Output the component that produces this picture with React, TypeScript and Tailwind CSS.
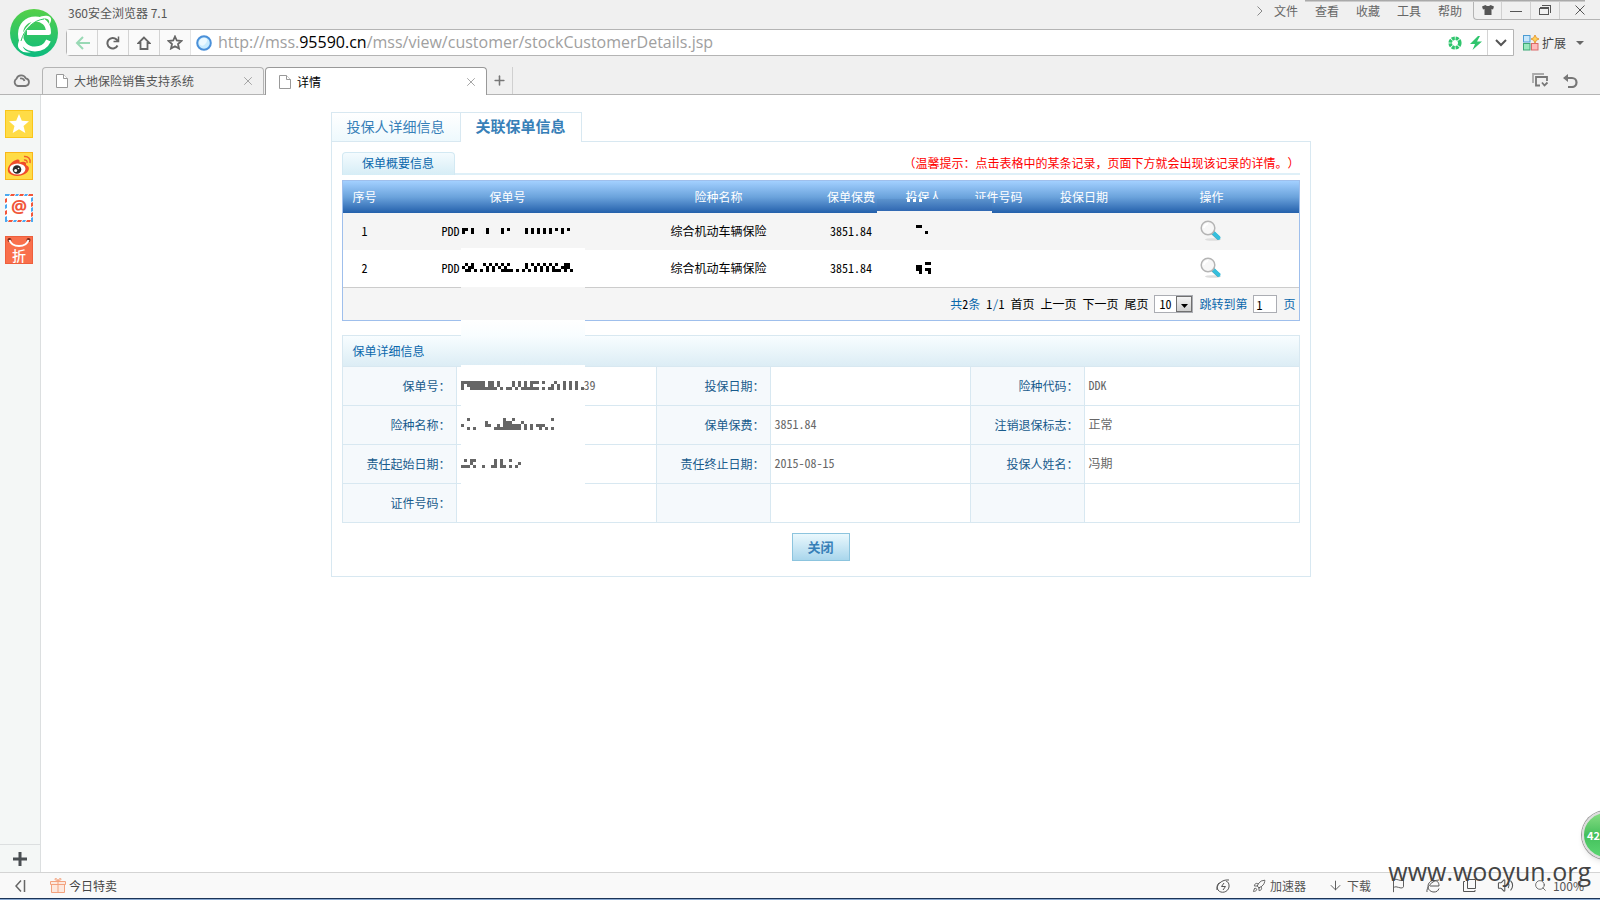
import React, { useState } from 'react';
import { Rocket, ArrowDown, Flag, Search, Volume2, X, Plus } from 'lucide-react';

interface Policy {
  no: number;
  prefix: string;
  mask: string[];
  kind: string;
  fee: string;
  holderMask: string[];
}

const policies: Policy[] = [
  {
    no: 1,
    prefix: 'PDD',
    mask: [
      '##.#....#....#.#.....#.#.#.#.#.#.#.#',
      '#..#....#....#.......#.#.#.#.#...#..',
    ],
    kind: '综合机动车辆保险',
    fee: '3851.84',
    holderMask: ['##...', '.....', '...#.', '.....'],
  },
  {
    no: 2,
    prefix: 'PDD',
    mask: [
      '.#.#...#.#.#.#.#.....#.#.#.#.#.#..##.',
      '#.##....#.#.#.#......#..#.#.#.#..###.',
      '.##.#.#.#.#..####.#.#.#.#.#.#.###.#.#',
    ],
    kind: '综合机动车辆保险',
    fee: '3851.84',
    holderMask: ['...##', '##...', '##.##', '.#..#'],
  },
];

interface Field {
  label: string;
  value?: string;
  mask?: string[];
}

const details: Field[][] = [
  [
    {
      label: '保单号：',
      value: '39',
      mask: [
        '########.##.#....#.#.#.###.#...#..#.#.#..',
        '#.######.##.#....#.#.#.#......#.#.#.#.#..',
        '#..#########.#.##.#.######.#.##.#.#.#.#.#',
      ],
    },
    { label: '投保日期：' },
    { label: '险种代码：', value: 'DDK' },
  ],
  [
    {
      label: '险种名称：',
      mask: [
        '..#...........#..#............#',
        '........#.....###...#..........',
        '#.......##..#.######.#.#.###...',
        '..#.#......#########.#.#..#.#.#',
      ],
    },
    { label: '保单保费：', value: '3851.84' },
    { label: '注销退保标志：', value: '正常' },
  ],
  [
    {
      label: '责任起始日期：',
      mask: [
        '.#.##......#.#..#....',
        '...#.......#.#.....#.',
        '###.#..#..##.##.#.#..',
      ],
    },
    { label: '责任终止日期：', value: '2015-08-15' },
    { label: '投保人姓名：', value: '冯期' },
  ],
  [{ label: '证件号码：' }, { label: '' }, { label: '' }],
];

// Redacted value, drawn as 3px blocks
const Mosaic: React.FC<{ rows: string[]; cols?: number; className?: string }> = ({
  rows,
  cols,
  className,
}) => {
  const width = (cols ?? rows[0].length) * 3;
  const height = rows.length * 3;
  return (
    <svg
      width={width}
      height={height}
      viewBox={`0 0 ${width} ${height}`}
      shapeRendering="crispEdges"
      fill="currentColor"
      className={`shrink-0 ${className ?? ''}`}
    >
      {rows.map((row, y) =>
        row
          .split('')
          .map((c, x) =>
            c === '#' ? <rect key={`${x}-${y}`} x={x * 3} y={y * 3} width="3" height="3" /> : null
          )
      )}
    </svg>
  );
};

const BrowserLogo = () => (
  <svg width="48" height="48" viewBox="0 0 48 48" className="mt-[9px] ml-[10px]">
    <defs>
      <linearGradient id="logo" x1="0" y1="0" x2="0" y2="1">
        <stop offset="0" stopColor="#55d048" />
        <stop offset="1" stopColor="#0cbb80" />
      </linearGradient>
    </defs>
    <circle cx="24" cy="24" r="24" fill="url(#logo)" />
    <path
      d="M17 23.500H38.500C38.500 14.500 32.500 10 25.500 10C16 10 10.500 17 10.500 25C10.500 34 16.500 40 25 40C31.500 40 36 37 38.500 31.500"
      fill="none"
      stroke="#fff"
      strokeWidth="5"
      strokeLinejoin="round"
    />
    <path d="M8 35C13 18 27 5 38 7C42 8 42 12 39 16C41 8 33 8 25 13C16 19 11 28 13 38C14 41 18 43 21 43C14 45 7 41 8 35Z" fill="#fff" />
    <path d="M11 32C14 20 24 11 34 10" fill="none" stroke="#2fc764" strokeWidth="1" />
  </svg>
);

const PageIcon = () => (
  <svg width="12" height="14" viewBox="0 0 12 14" fill="#fff" stroke="#999" className="shrink-0">
    <path d="M.5.5H7.500L11.500 4.500V13.500H.5Z" />
    <path d="M7.500.5V4.500H11.500" />
  </svg>
);

const Magnifier = () => (
  <svg width="22" height="22" viewBox="0 0 22 22">
    <ellipse cx="13" cy="19.500" rx="8" ry="1.300" fill="#ddd" />
    <path d="M12 12L19 18.500" stroke="#7a8a90" strokeWidth="4" />
    <path d="M13.500 13L18.500 17.800" stroke="#35bfdd" strokeWidth="4" strokeLinecap="round" />
    <circle cx="8" cy="8" r="6.800" fill="#f7f7f7" stroke="#b4b4b4" strokeWidth="1.500" />
    <path d="M4 8A4.500 4.500 0 0 1 8 4" stroke="#fff" strokeWidth="2" fill="none" />
  </svg>
);

const TitleRow = () => (
  <div className="flex h-[29px] justify-between">
    <div className="pl-0.5 pt-[3px] text-[12px] leading-[20px] text-[#555]">360安全浏览器 7.1</div>
    <div className="flex items-start">
      <nav className="flex items-center gap-[17px] pr-[11px] pt-px text-[12px] leading-[20px] text-[#666]">
        <svg width="6" height="10" viewBox="0 0 6 10" fill="none" stroke="#888" className="-mr-1.5">
          <path d="M.5.5L5 5L.5 9.500" />
        </svg>
        <a href="#file">文件</a>
        <a href="#view">查看</a>
        <a href="#fav">收藏</a>
        <a href="#tools">工具</a>
        <a href="#help">帮助</a>
      </nav>
      <div className="flex h-5 rounded-bl border-b border-l border-[#b4b4b4] text-[#555]">
        <button aria-label="皮肤" className="flex w-7 items-center justify-center border-r border-[#d0d0d0]">
          <svg width="12" height="10" viewBox="0 0 12 10" fill="currentColor">
            <path d="M3.500 0C4.500 1.300 7.500 1.300 8.500 0L12 1.500L11 4.500L9.500 4V10H2.500V4L1 4.500L0 1.500Z" />
          </svg>
        </button>
        <button aria-label="最小化" className="flex w-[29px] items-center justify-center border-r border-[#d0d0d0]">
          <span className="mt-1 h-px w-3 bg-[#555]" />
        </button>
        <button aria-label="还原" className="flex w-[29px] items-center justify-center border-r border-[#d0d0d0]">
          <svg width="12" height="10" viewBox="0 0 12 10" fill="none" stroke="currentColor" shapeRendering="crispEdges">
            <path d="M.5 3.500H9.500V9.500H.5ZM.5 2.500H9.500M2.500 .5H11.500V8" />
          </svg>
        </button>
        <button aria-label="关闭窗口" className="flex w-10 items-center justify-center">
          <svg width="10" height="10" viewBox="0 0 10 10" stroke="currentColor">
            <path d="M.5.5L9.500 9.500M9.500.5L.5 9.500" />
          </svg>
        </button>
      </div>
    </div>
  </div>
);

const AddressRow = () => (
  <div className="flex h-[27px]">
    <div className="flex flex-1 rounded-l-sm border border-[#b4b4b4] bg-white">
      <button aria-label="后退" className="flex w-[31px] items-center justify-center border-r border-[#d4d4d4] bg-[#fafafa]">
        <svg width="15" height="14" viewBox="0 0 15 14" fill="none" stroke="#99d9b5" strokeWidth="2">
          <path d="M15 7H2M8 1L2 7L8 13" />
        </svg>
      </button>
      <button aria-label="刷新" className="flex w-[31px] items-center justify-center border-r border-[#d4d4d4] bg-[#fafafa]">
        <svg width="14" height="14" viewBox="0 0 14 14" fill="none" stroke="#666" strokeWidth="2">
          <path d="M11.500 9.500A5.300 5.300 0 1 1 10.500 3.500L12 5" />
          <path d="M12.500 .5V5.500H7.500" strokeWidth="1.500" />
        </svg>
      </button>
      <button aria-label="主页" className="flex w-[31px] items-center justify-center border-r border-[#d4d4d4] bg-[#fafafa]">
        <svg width="14" height="14" viewBox="0 0 14 14" fill="none" stroke="#666" strokeWidth="1.800">
          <path d="M7 1.500L1.500 7H3.500V13H10.500V7H12.500Z" />
        </svg>
      </button>
      <button aria-label="收藏" className="flex w-[31px] items-center justify-center border-r border-[#e4e4e4] bg-[#fafafa]">
        <svg width="16" height="15" viewBox="0 0 16 15" fill="none" stroke="#666" strokeWidth="1.800">
          <path d="M8 1.500L9.800 5.500L14.300 6L11 9L12 13.500L8 11.200L4 13.500L5 9L1.700 6L6.200 5.500Z" />
        </svg>
      </button>
      <svg width="16" height="16" viewBox="0 0 16 16" className="mr-1.5 ml-[5px] self-center">
        <circle cx="8" cy="8" r="6.800" fill="#c9ecff" stroke="#4a90d9" strokeWidth="2" />
        <path d="M3 8A5 5 0 0 1 8 3C11 3 12 5 10 8C8 11 5 12 3 8Z" fill="#ecf9ff" />
      </svg>
      <div className="flex-1 whitespace-nowrap font-['Open_Sans'] text-[16px] leading-[24px] text-[#a0a0a0]">
        http://mss.<span className="text-black">95590.cn</span>/mss/view/customer/stockCustomerDetails.jsp
      </div>
      <svg width="14" height="14" viewBox="0 0 14 14" className="mr-2 self-center">
        <circle cx="7" cy="7" r="4.800" fill="none" stroke="#2fc56d" strokeWidth="3.600" strokeDasharray="3 .77" />
      </svg>
      <svg width="12" height="14" viewBox="0 0 12 14" className="mr-[5px] self-center">
        <path d="M8 0L0 8H5L2.500 14L12 5.500H7L10 0Z" fill="#2fc56d" />
      </svg>
      <button aria-label="历史" className="flex w-[26px] items-center justify-center border-l border-[#d4d4d4]">
        <svg width="12" height="8" viewBox="0 0 12 8" fill="none" stroke="#555" strokeWidth="2">
          <path d="M1 1L6 6L11 1" />
        </svg>
      </button>
    </div>
    <button className="flex w-[86px] items-center pl-[9px] text-[12px] text-[#444]">
      <svg width="16" height="16" viewBox="0 0 16 16" className="mr-[3px]">
        <rect x=".5" y=".5" width="6.500" height="6.500" fill="#c6e6fb" stroke="#4b9bd3" />
        <rect x=".5" y="8.500" width="6.500" height="6.500" fill="#99e8bd" stroke="#3da876" />
        <rect x="8.500" y="8.500" width="6.500" height="6.500" fill="#ffbaba" stroke="#d96a6a" />
        <path d="M12 0L13.300 2.700L16 4L13.300 5.300L12 8L10.700 5.300L8 4L10.700 2.700Z" fill="#ffd25c" stroke="#e08a1e" strokeWidth=".8" />
      </svg>
      扩展
      <svg width="8" height="4" viewBox="0 0 8 4" className="ml-2.5" fill="#666">
        <path d="M0 0H8L4 4Z" />
      </svg>
    </button>
  </div>
);

const TabRow = () => (
  <div className="relative mt-[11px] flex h-7 items-stretch border-b border-[#b4b4b4] text-[12px] text-[#555]">
    <button aria-label="云同步" className="flex w-[42px] items-center justify-center">
      <svg width="17" height="13" viewBox="0 0 17 13" fill="none" stroke="#777" strokeWidth="1.800">
        <path d="M5 12A4 4 0 0 1 3.500 4.700A5 5 0 0 1 12.800 4.300A3.900 3.900 0 0 1 12.500 12ZM7 4.500C9 4 11 5 11.500 7" />
      </svg>
    </button>
    <div className="flex w-[222px] items-center rounded-t border border-b-0 border-[#b4b4b4] pl-[13px]">
      <PageIcon />
      <span className="ml-1.5 flex-1">大地保险销售支持系统</span>
      <button aria-label="关闭标签" className="mr-2 text-[#999]">
        <X size={14} strokeWidth={1.5} />
      </button>
    </div>
    <div className="z-10 -mb-px ml-px flex w-[222px] items-center rounded-t border border-b-0 border-[#999] bg-white pl-[13px]">
      <PageIcon />
      <span className="ml-1.5 flex-1 text-black">详情</span>
      <button aria-label="关闭标签" className="mr-2 text-[#999]">
        <X size={14} strokeWidth={1.5} />
      </button>
    </div>
    <button aria-label="新标签" className="flex w-[26px] items-center justify-center border-r border-[#d0d0d0]">
      <Plus size={15} strokeWidth={2.5} color="#777" />
    </button>
    <div className="ml-auto flex items-center gap-3.5 pr-[22px]">
      <svg width="17" height="15" viewBox="0 0 17 15" fill="none" stroke="#777" strokeWidth="1.800">
        <path d="M1 10V1H12" stroke="#aaa" />
        <path d="M8 12.500H4V4H15V8" />
        <path d="M10 9.500L12.500 12.500L15.500 9.500" />
      </svg>
      <svg width="15" height="14" viewBox="0 0 15 14" fill="none" stroke="#777" strokeWidth="2.200">
        <path d="M1 4H9A4.500 4.500 0 0 1 9 13H5" />
        <path d="M5 0V8L0 4Z" fill="#777" stroke="none" />
      </svg>
    </div>
  </div>
);

const SideBar = () => (
  <aside className="flex w-[41px] shrink-0 flex-col border-r border-[#dcdfe0] bg-[#f4f7f6]">
    <div className="flex flex-col gap-3.5 pt-[15px] pl-[5px]">
      <svg width="28" height="28" viewBox="0 0 28 28">
        <rect x=".5" y=".5" width="27" height="27" fill="#ffdc46" stroke="#f9c61a" />
        <path d="M14 4L16.800 10.800L24 11.300L18.500 16L20.300 23L14 19.200L7.700 23L9.500 16L4 11.300L11.200 10.800Z" fill="#fff" />
      </svg>
      <svg width="28" height="28" viewBox="0 0 28 28">
        <rect x=".5" y=".5" width="27" height="27" fill="#ffdc46" stroke="#f9b61a" />
        <path d="M11 8C14 7 15 8 14.500 10.500C19 9 22 10 21 13C25 14.500 24.500 18 22 20.500C17 25 7 25 3.500 20.500C1 16 6 9.500 11 8Z" fill="#f04c2a" />
        <ellipse cx="12.500" cy="17" rx="8" ry="5.500" fill="#fff" />
        <circle cx="12" cy="17.500" r="4.300" fill="#2c2c2c" />
        <circle cx="10.700" cy="18.500" r="1.500" fill="#fff" />
        <circle cx="13.500" cy="16.500" r=".8" fill="#fff" />
        <path d="M19 4.500C23 4 26 7 25 11M19 8C21 7.500 22.500 9 22 11" fill="none" stroke="#f0602a" strokeWidth="1.500" />
      </svg>
      <svg width="28" height="28" viewBox="0 0 28 28">
        <rect width="28" height="28" fill="#fff" />
        <g fill="#f2563a">
          <path d="M6 0H10L9 2H5ZM15 0H19L18 2H14ZM24 0H28V2H23ZM4 26H8L7 28H3ZM13 26H17L16 28H12ZM22 26H26L25 28H21Z" />
          <path d="M0 5L2 4V8L0 9ZM0 17L2 16V20L0 21ZM26 9L28 8V12L26 13ZM26 19L28 18V22L26 23Z" />
        </g>
        <g fill="#4ba9f0">
          <path d="M0 0H5L4 2H0ZM11 0H14L13 2H10ZM20 0H23L22 2H19ZM0 26H3L2 28H0ZM9 26H12L11 28H8ZM18 26H21L20 28H17Z" />
          <path d="M0 11L2 10V14L0 15ZM0 23L2 22V26L0 27ZM26 4L28 3V7L26 8ZM26 14L28 13V17L26 18ZM26 24L28 23V28H26Z" />
        </g>
        <text x="14" y="19" textAnchor="middle" fontFamily="Open Sans" fontSize="18" fontWeight="700" fill="#f0563a">@</text>
      </svg>
      <svg width="28" height="28" viewBox="0 0 28 28">
        <rect x=".5" y=".5" width="27" height="27" fill="#f9704c" stroke="#ee5f3c" />
        <circle cx="4.500" cy="4" r="2" fill="#7a2818" />
        <circle cx="23.500" cy="4" r="2" fill="#7a2818" />
        <path d="M4.500 4C7 12 21 12 23.500 4" fill="none" stroke="#fff" strokeWidth="2" />
        <text x="14" y="25" textAnchor="middle" fontFamily="Noto Sans CJK SC" fontSize="14" fontWeight="500" fill="#fff">折</text>
      </svg>
    </div>
    <button aria-label="添加" className="mt-auto flex h-7 items-center justify-center border-t border-[#dcdfe0]">
      <svg width="14" height="14" viewBox="0 0 14 14" stroke="#4a4f52" strokeWidth="3">
        <path d="M0 7H14M7 0V14" />
      </svg>
    </button>
  </aside>
);

const PolicyTable: React.FC<{ onSelect: (no: number) => void }> = ({ onSelect }) => (
  <table className="w-full table-fixed border-separate border-spacing-0 border border-[#9fbfec] text-center text-[12px] leading-[16px]">
    <colgroup>
      <col className="w-[44px]" />
      <col className="w-[242px]" />
      <col className="w-[180px]" />
      <col className="w-[85px]" />
      <col className="w-[60px]" />
      <col className="w-[90px]" />
      <col className="w-[81px]" />
      <col />
    </colgroup>
    <thead>
      <tr className="h-8 bg-linear-to-b from-[#a3d0ff] via-[#6ba3dc] to-[#2360ab] text-white">
        <th className="font-normal">序号</th>
        <th className="font-normal">保单号</th>
        <th className="font-normal">险种名称</th>
        <th className="font-normal">保单保费</th>
        <th className="font-normal">投保人</th>
        <th className="font-normal">证件号码</th>
        <th className="font-normal">投保日期</th>
        <th className="font-normal">操作</th>
      </tr>
    </thead>
    <tbody className="text-black">
      {policies.map((p) => (
        <tr key={p.no} className="h-[37px] odd:bg-[#f5f5f5] even:bg-white">
          <td className="pb-0.5">{p.no}</td>
          <td className="pb-0.5">
            <div className="flex items-center pl-[55px]">
              <span className="w-5 shrink-0 text-left">{p.prefix}</span>
              <Mosaic rows={p.mask} />
            </div>
          </td>
          <td className="pb-0.5">{p.kind}</td>
          <td className="pb-0.5">{p.fee}</td>
          <td className="pb-0.5">
            <Mosaic rows={p.holderMask} className="ml-[22px]" />
          </td>
          <td />
          <td />
          <td className="pb-0.5">
            <button aria-label="查看" className="block w-full pl-[75px]" onClick={() => onSelect(p.no)}>
              <Magnifier />
            </button>
          </td>
        </tr>
      ))}
    </tbody>
    <tfoot>
      <tr className="h-[33px] bg-[#f5f5f5]">
        <td colSpan={8} className="border-t border-[#ccc]">
          <div className="flex items-center justify-end gap-1.5 pr-[3px] text-[#0b68ac]">
            <span>
              共<span className="text-black">2</span>条
            </span>
            <span>
              <span className="text-black">1</span>/<span className="text-black">1</span>
            </span>
            <a href="#first" className="text-black">首页</a>
            <a href="#prev" className="text-black">上一页</a>
            <a href="#next" className="text-black">下一页</a>
            <a href="#last" className="text-black">尾页</a>
            <span className="relative">
              <select
                aria-label="每页条数"
                defaultValue="10"
                className="block h-[18px] w-[39px] appearance-none border border-[#abadb3] bg-white pl-1 leading-[16px] text-black"
              >
                <option>10</option>
                <option>20</option>
              </select>
              <span className="pointer-events-none absolute top-px right-px flex h-4 w-4 items-center justify-center border border-[#707070] bg-linear-to-b from-[#f4f4f4] to-[#cfcfcf]">
                <svg width="7" height="4" viewBox="0 0 7 4" className="mt-1">
                  <path d="M0 0H7L3.500 4Z" />
                </svg>
              </span>
            </span>
            <label htmlFor="page">跳转到第</label>
            <input
              id="page"
              type="text"
              defaultValue="1"
              className="h-[18px] w-6 border border-[#abadb3] bg-white pl-0.5 leading-[16px] text-black"
            />
            <span>页</span>
          </div>
        </td>
      </tr>
    </tfoot>
  </table>
);

const DetailTable = () => (
  <table className="mt-3.5 w-full table-fixed border-separate border-spacing-0 border-t border-l border-[#d8e8f1] text-[12px] leading-[16px]">
    <colgroup>
      <col className="w-[114px]" />
      <col className="w-[200px]" />
      <col className="w-[114px]" />
      <col className="w-[200px]" />
      <col className="w-[114px]" />
      <col />
    </colgroup>
    <thead>
      <tr className="h-[31px]">
        <th
          colSpan={6}
          className="border-r border-b border-[#d8e8f1] bg-linear-to-b from-[#f8fdff] to-[#dcedf5] pl-2.5 text-left font-normal text-[#0b68ac]"
        >
          保单详细信息
        </th>
      </tr>
    </thead>
    <tbody>
      {details.map((row, i) => (
        <tr key={i} className="h-[39px]">
          {row.map((f, j) => (
            <React.Fragment key={j}>
              <th className="border-r border-b border-[#d8e8f1] bg-[#f5f9fc] pr-[5px] text-right font-normal text-[#185b8c]">
                {f.label}
              </th>
              <td className="border-r border-b border-[#d8e8f1] pb-0.5 pl-1 text-[#666]">
                <div className="flex items-center">
                  {f.mask && <Mosaic rows={f.mask} cols={41} />}
                  {f.value}
                </div>
              </td>
            </React.Fragment>
          ))}
        </tr>
      ))}
    </tbody>
  </table>
);

// Erased strips that run across the two tables
const Erasures = () => (
  <>
    <div className="absolute top-[68px] left-[119px] h-0.5 w-[124px] bg-white" />
    <div className="absolute top-[107px] left-[119px] h-px w-[124px] bg-[#f5f5f5]" />
    <div className="absolute top-[140px] left-[119px] h-4 w-[124px] bg-linear-to-b from-white to-[#f8fdff]" />
    <div className="absolute top-[185px] left-[119px] h-0.5 w-[124px] bg-white" />
    <div className="absolute top-[224px] left-[119px] h-1 w-[124px] bg-white" />
    <div className="absolute top-[263px] left-[119px] h-1 w-[124px] bg-white" />
    <div className="absolute top-[302px] left-[119px] h-1 w-[124px] bg-white" />
    <div className="absolute top-[19px] left-[535px] h-3 w-[115px] bg-linear-to-b from-[#5c93cd] to-[#3068b2]" />
    <div className="absolute top-[31px] left-[535px] h-0.5 w-[115px] bg-[#f5f5f5]" />
    <Mosaic rows={['#.#.#']} className="absolute top-[19px] left-[565px] text-white" />
  </>
);

const Content = () => {
  const [tab, setTab] = useState('policy');
  const [, setSelected] = useState(2);

  return (
    <main className="flex-1 bg-white pt-[17px] font-['Noto_Sans_CJK_SC',sans-serif] [font-feature-settings:'hwid']">
      <div className="mx-auto w-full max-w-[980px]">
        <div className="relative z-10 -mb-px flex h-[30px] text-[#3780b8]">
          <button
            onClick={() => setTab('holder')}
            className="w-[129px] border-t border-b border-l border-[#d8e8f1] bg-linear-to-b from-white to-[#eef9fd] pb-0.5 text-[14px]"
          >
            投保人详细信息
          </button>
          <button
            onClick={() => setTab('policy')}
            aria-pressed={tab === 'policy'}
            className="w-[122px] border border-b-0 border-[#d8e8f1] bg-white pb-0.5 text-[15px] font-bold"
          >
            关联保单信息
          </button>
        </div>
        <section className="border border-[#d8e8f1] px-2.5 pt-2.5 pb-[15px]">
          <div className="mb-[5px] flex h-[23px] items-end justify-between border-b-2 border-[#dff0f8]">
            <h2 className="-mb-0.5 h-[23px] w-[113px] rounded-t border border-b-0 border-[#d3e9f3] bg-linear-to-b from-[#f4fbfe] to-[#d6edf6] text-center text-[12px] leading-[20px] text-[#0b68ac]">
              保单概要信息
            </h2>
            <p className="text-[12px] leading-[20px] text-[#f00] [font-feature-settings:normal] [text-spacing-trim:space-all]">
              （温馨提示：点击表格中的某条记录，页面下方就会出现该记录的详情。）
            </p>
          </div>
          <div className="relative">
            <PolicyTable onSelect={setSelected} />
            <DetailTable />
            <Erasures />
          </div>
          <button className="mx-auto mt-2.5 block h-7 w-[58px] border border-[#8cc4de] bg-linear-to-b from-[#eaf8fd] to-[#a9d6ec] text-[13px] font-bold text-[#3780b8]">
            关闭
          </button>
        </section>
      </div>
    </main>
  );
};

const StatusBar = () => (
  <footer className="flex h-[26px] items-center border-t border-[#d4d4d4] bg-[#f9f9f9] text-[12px] leading-[20px] text-[#444]">
    <button aria-label="收起" className="flex w-[41px] items-center justify-center">
      <svg width="11" height="12" viewBox="0 0 11 12" fill="none" stroke="#666" strokeWidth="1.500">
        <path d="M6 .5L1 6L6 11.500M9.500 0V12" />
      </svg>
    </button>
    <a href="#deals" className="ml-[9px] flex items-center gap-[3px]">
      <svg width="16" height="15" viewBox="0 0 16 15" fill="#fde8de" stroke="#f3a27e">
        <path d="M1.500 6.500H14.500V14.500H1.500ZM.5 3.500H15.500V6.500H.5ZM8 3.500V14.500M8 3C5 3 4 0 6 .5C7.500 1 8 3 8 3C8 3 8.500 1 10 .5C12 0 11 3 8 3Z" />
      </svg>
      今日特卖
    </a>
    <div className="ml-auto flex items-center pr-4 text-[#555]">
      <svg width="14" height="14" viewBox="0 0 14 14" fill="none" stroke="currentColor" className="mr-[22px]">
        <path d="M1 11C0 6 6 0 13 1M3.500 3.500A6 6 0 0 0 2 11C5 15 12 13.500 13 8C13.500 5 12 2.500 10 2" />
        <path d="M8 4L5.500 7.500H9.500L7 11" />
      </svg>
      <Rocket size={14} strokeWidth={1.5} className="mr-1" />
      <span className="mr-[22px]">加速器</span>
      <ArrowDown size={15} strokeWidth={1.5} className="mr-1" />
      <span className="mr-5">下载</span>
      <Flag size={15} strokeWidth={1.5} className="mr-5" />
      <svg width="15" height="14" viewBox="0 0 15 14" fill="none" stroke="currentColor" className="mr-[22px]">
        <path d="M4 7H13C13 3 11 1.500 8 1.500C4.500 1.500 2 4 2 7.500C2 11 5 13 8 13C10.500 13 12 12 13 9.500M1 13C0 9 6 1 13 1" />
      </svg>
      <svg width="14" height="14" viewBox="0 0 14 14" fill="none" stroke="currentColor" className="mr-5">
        <path d="M4.500 .5H12.500V9.500H4.500ZM2 2.500H.5V12.500H12V11" />
      </svg>
      <Volume2 size={17} strokeWidth={1.5} className="mr-5" />
      <Search size={13} strokeWidth={1.5} className="mr-1.5" />
      <span>100%</span>
    </div>
  </footer>
);

export default function App() {
  return (
    <div className="relative flex min-h-screen flex-col overflow-hidden bg-white font-['Noto_Sans_CJK_SC',sans-serif]">
      <header className="bg-[#f0f0f0]">
        <div className="flex">
          <div className="h-0 w-[66px] shrink-0">
            <BrowserLogo />
          </div>
          <div className="min-w-0 flex-1">
            <TitleRow />
            <AddressRow />
          </div>
        </div>
        <TabRow />
      </header>
      <div className="absolute top-0 right-[15px] h-0.5 w-[280px] bg-linear-to-b from-[#999] to-[#ddd]" />

      <div className="flex flex-1">
        <SideBar />
        <Content />
      </div>

      <StatusBar />
      <div className="h-0.5 border-t border-[#1c3457] bg-[#8aa9d2]" />

      {/* Floating accelerator ball and watermark */}
      <div className="absolute right-[-30px] bottom-[41px] flex h-12 w-12 items-center rounded-full border-2 border-[#ddd] bg-linear-to-b from-[#86dd84] via-[#43c05c] to-[#5bd672] pl-[3px] text-[11px] font-bold text-white shadow-md ring-1 ring-[#999]">
        42
      </div>
      <div className="absolute right-[9px] bottom-[13px] font-['Open_Sans'] text-[25px] leading-[32px] text-[#444]">
        www.wooyun.org
      </div>
    </div>
  );
}
